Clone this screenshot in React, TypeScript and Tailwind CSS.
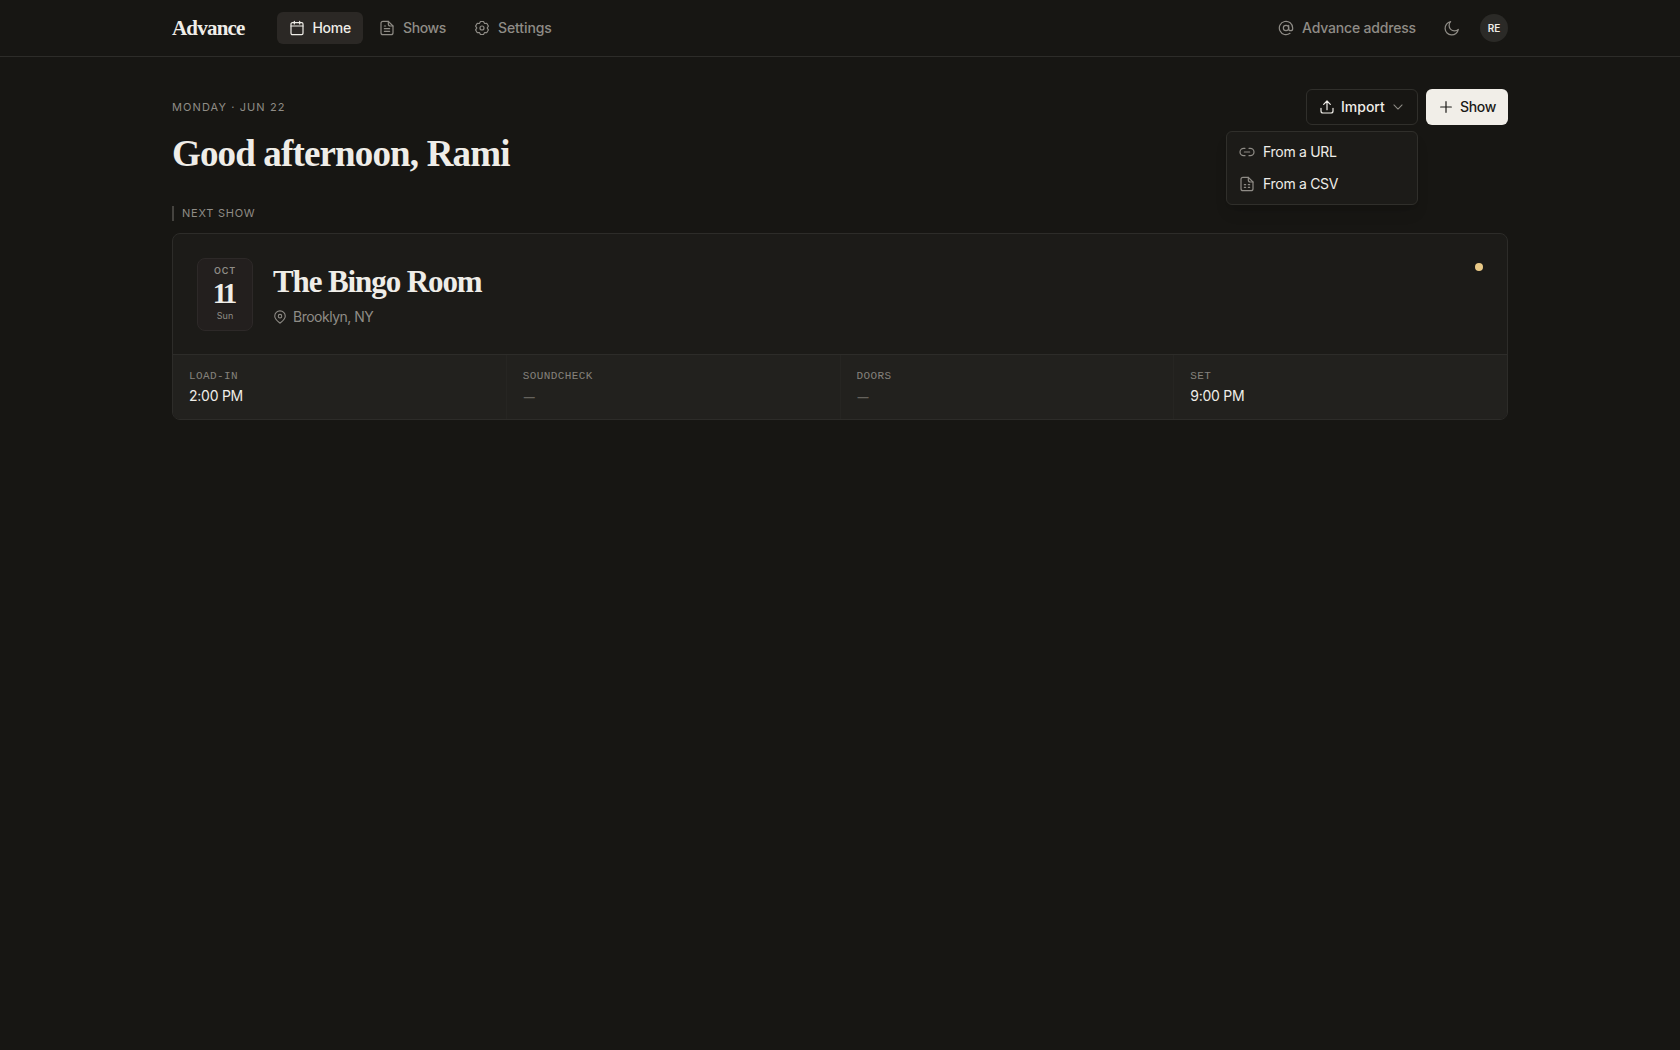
import type { ReactNode } from "react";

type IconProps = { size?: number; className?: string; children: ReactNode };

function Icon({ size = 16, className = "", children }: IconProps) {
  return (
    <svg
      width={size}
      height={size}
      viewBox="0 0 24 24"
      fill="none"
      stroke="currentColor"
      strokeWidth="1.8"
      strokeLinecap="round"
      strokeLinejoin="round"
      className={`shrink-0 ${className}`}
    >
      {children}
    </svg>
  );
}

const slots = [
  { label: "LOAD-IN", value: "2:00 PM" },
  { label: "SOUNDCHECK", value: "—" },
  { label: "DOORS", value: "—" },
  { label: "SET", value: "9:00 PM" },
];

function Header() {
  return (
    <header className="h-[57px] border-b border-[#2d2c29]">
      <div className="mx-auto flex h-14 max-w-[1400px] items-center px-8">
        <span className="w-[104.5px] pt-0.5 font-['Liberation_Serif',serif] text-[21px] font-bold tracking-[-0.8px] text-[#efede8]">
          Advance
        </span>
        <nav className="flex items-center gap-1 text-sm font-medium text-[#8f8c86]">
          <a className="flex h-8 w-[86.5px] items-center gap-2 rounded-md bg-[#2b2825] px-3 text-[#efede8]">
            <Icon>
              <path d="M8 2v4M16 2v4M3 9h18" />
              <rect x="3" y="4" width="18" height="18" rx="2" />
            </Icon>
            <span className="tracking-[-0.3px]">Home</span>
          </a>
          <a className="flex h-8 w-[91px] items-center gap-2 px-3">
            <Icon>
              <path d="M14 2H6a3 3 0 0 0-3 3v14a3 3 0 0 0 3 3h12a3 3 0 0 0 3-3V9z" />
              <path d="M14 2v4a3 3 0 0 0 3 3h4M8 9h2M8 13h8M8 17h8" />
            </Icon>
            <span className="tracking-[-0.4px]">Shows</span>
          </a>
          <a className="flex h-8 items-center gap-2 px-3">
            <Icon>
              <path d="M9.750 2.260h4.500L15.900 5.250l3.400-.05 2.260 3.900L19.800 12l1.760 2.900-2.260 3.900-3.400-.05-1.650 2.990h-4.500L8.100 18.750l-3.400.05-2.260-3.900L4.200 12 2.440 9.100l2.260-3.900 3.400.05z" />
              <circle cx="12" cy="12" r="3" />
            </Icon>
            <span className="tracking-[-0.1px]">Settings</span>
          </a>
        </nav>
        <div className="ml-auto flex items-center text-[#8f8c86]">
          <a className="flex items-center gap-2 text-sm font-medium">
            <Icon>
              <circle cx="12" cy="12" r="4" />
              <path d="M16 8v5a3 3 0 0 0 6 0v-1a10 10 0 1 0-4 8" />
            </Icon>
            <span className="w-[114px] whitespace-nowrap tracking-[-0.18px]">Advance address</span>
          </a>
          <Icon className="ml-7">
            <path d="M21.500 14A10 10 0 1 1 10 2.500 7.500 7.500 0 0 0 21.500 14z" />
          </Icon>
          <span className="ml-5 flex size-7 items-center justify-center rounded-full bg-[#2b2a27] text-[10px] font-semibold text-[#efede8]">
            RE
          </span>
        </div>
      </div>
    </header>
  );
}

function ImportMenu() {
  return (
    <div className="absolute top-[42px] right-0 h-[74px] w-48 rounded-md border border-[#302f2b] bg-[#1c1b18] p-1 text-sm font-normal text-[#efede8] shadow-lg">
      <div className="flex h-8 items-center gap-2 px-2">
        <Icon className="text-[#8f8c86]">
          <path d="M9 17.500H7A5.500 5.500 0 0 1 7 6.500h2M15 6.500h2a5.500 5.500 0 0 1 0 11h-2M8 12h8" />
        </Icon>
        <span className="tracking-[-0.3px]">From a URL</span>
      </div>
      <div className="flex h-8 items-center gap-2 px-2">
        <Icon className="text-[#8f8c86]">
          <path d="M14 2H6a3 3 0 0 0-3 3v14a3 3 0 0 0 3 3h12a3 3 0 0 0 3-3V9z" />
          <path d="M14 2v4a3 3 0 0 0 3 3h4M8 13h2M14 13h2M8 17h2M14 17h2" />
        </Icon>
        <span className="tracking-[-0.3px]">From a CSV</span>
      </div>
    </div>
  );
}

function NextShow() {
  return (
    <section className="h-[187px] overflow-hidden rounded-lg border border-[#2d2c29] bg-[#1c1b18]">
      <div className="flex h-[120px] px-6 pt-6">
        <div className="flex h-[73px] w-14 flex-col items-center rounded-lg border border-[#2d2928] bg-[#231f1e] pt-1.5">
          <span className="text-[9px] leading-3 font-semibold tracking-[0.9px] text-[#8f8c86]">OCT</span>
          <span className="-ml-[3px] font-['Liberation_Serif',serif] text-[29px] leading-8 font-bold tracking-[-3px] text-[#efede8]">
            11
          </span>
          <span className="mt-px text-[9px] leading-3 text-[#8f8c86]">Sun</span>
        </div>
        <div className="ml-5">
          <h2 className="pt-1 font-['Liberation_Serif',serif] text-[31px] leading-10 font-bold tracking-[-1.1px] whitespace-nowrap text-[#efede8]">
            The Bingo Room
          </h2>
          <p className="mt-[5px] flex items-center gap-1.5 text-sm text-[#8f8c86]">
            <Icon size={14}>
              <path d="M21 10.500c0 5-6 9.500-9 12-3-2.500-9-7-9-12a9 9 0 0 1 18 0z" />
              <circle cx="12" cy="10.500" r="3" />
            </Icon>
            <span className="tracking-[-0.5px]">Brooklyn, NY</span>
          </p>
        </div>
        <span className="mt-[5px] ml-auto size-2 rounded-full bg-[#e9c987]" />
      </div>
      <div className="grid h-[65px] grid-cols-4 gap-px border-t border-[#2d2c29] bg-[#262522]">
        {slots.map((slot) => (
          <div key={slot.label} className="bg-[#22211e] px-4 pt-[13px]">
            <div className="font-['Liberation_Mono',monospace] text-[11px] leading-4 tracking-[0.4px] text-[#85827c]">
              {slot.label}
            </div>
            {slot.value === "—" ? (
              <div className="mt-[3px] ml-px text-[11px] leading-5 font-semibold text-[#65625d]">{slot.value}</div>
            ) : (
              <div className="mt-0.5 text-sm tracking-[-0.25px] text-[#efede8]">{slot.value}</div>
            )}
          </div>
        ))}
      </div>
    </section>
  );
}

export default function App() {
  return (
    <div className="min-h-screen bg-[#171613] font-['Inter',sans-serif]">
      <Header />
      <main className="mx-auto max-w-[1400px] px-8 pt-8">
        <div className="flex h-[117px] justify-between">
          <div>
            <p className="pt-2.5 text-[11px] leading-4 tracking-[1.1px] text-[#8f8c86]">MONDAY · JUN 22</p>
            <h1 className="mt-[19px] font-['Liberation_Serif',serif] text-[37px] leading-10 font-bold tracking-[-0.85px] whitespace-nowrap text-[#efede8]">
              Good afternoon, Rami
            </h1>
          </div>
          <div className="flex gap-2 text-sm font-medium">
            <div className="relative h-9">
              <button className="flex h-9 w-28 items-center gap-1.5 rounded-md border border-[#302f2b] px-3 text-[#efede8]">
                <Icon>
                  <path d="M12 16V3M7 8l5-5 5 5M3 14v4a3 3 0 0 0 3 3h12a3 3 0 0 0 3-3v-4" />
                </Icon>
                <span>Import</span>
                <Icon size={14} className="text-[#8f8c86]">
                  <path d="m5 8.500 7 7 7-7" />
                </Icon>
              </button>
              <ImportMenu />
            </div>
            <button className="flex h-9 w-[82px] items-center gap-1.5 rounded-md bg-[#f1eee8] px-3 text-[#1b1a17]">
              <Icon>
                <path d="M12 4v16M4 12h16" />
              </Icon>
              <span className="tracking-[-0.3px]">Show</span>
            </button>
          </div>
        </div>
        <div className="mb-3 flex h-[15px] items-center border-l-2 border-[#45433f] pl-2 text-[11px] tracking-[0.75px] text-[#8f8c86]">
          NEXT SHOW
        </div>
        <NextShow />
      </main>
    </div>
  );
}
